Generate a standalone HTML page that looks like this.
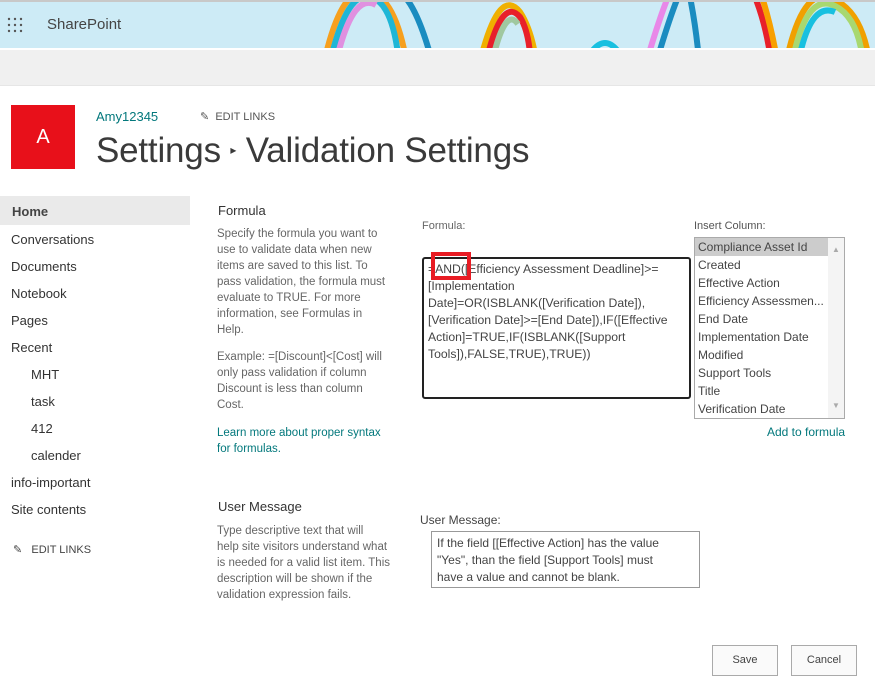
<!DOCTYPE html>
<html><head><meta charset="utf-8"><style>
*{margin:0;padding:0;box-sizing:border-box}
body{width:875px;height:682px;overflow:hidden;background:#fff;font-family:"Liberation Sans",sans-serif;color:#333;position:relative}
.a{position:absolute;white-space:nowrap}
.nav{font-size:13px;color:#333}
.desc{font-size:11.5px;line-height:16px;color:#666}
.link{color:#03787c}
</style></head><body>
<div class="a" style="left:0;top:0;width:875px;height:2px;background:#c8c8c8"></div>
<div class="a" style="left:0;top:2px;width:875px;height:46px;background:#cdebf6;overflow:hidden">
<svg width="875" height="46" style="position:absolute;left:0;top:0" fill="none" stroke-width="6">
<path d="M326 52 Q345 -25 375 -8 Q395 2 405 52" stroke="#f6a01e"/>
<path d="M332 52 Q350 -18 375 -3 Q392 6 398 52" stroke="#1fb6d6"/>
<path d="M338 52 Q354 -10 376 3" stroke="#e090e0"/>
<path d="M405 -5 Q418 10 430 52" stroke="#1a8cc0"/>
<path d="M482 52 Q500 -15 520 10 Q530 25 535 52" stroke="#f0b000"/>
<path d="M488 52 Q503 -5 520 15 Q528 28 530 52" stroke="#e8202a"/>
<path d="M494 52 Q506 5 518 22" stroke="#a0c8a0"/>
<path d="M590 52 Q605 30 620 52" stroke="#18c0e0"/>
<path d="M650 48 Q660 15 668 -5" stroke="#e888e8"/>
<path d="M660 48 Q670 15 678 -5" stroke="#1a8cc0"/>
<path d="M690 -5 Q695 20 698 48" stroke="#1a8cc0"/>
<path d="M755 -5 Q765 20 770 52" stroke="#e8202a"/>
<path d="M762 -5 Q770 20 776 52" stroke="#f8a000"/>
<path d="M788 52 Q805 -20 835 -2 Q860 10 868 52" stroke="#f0a000"/>
<path d="M794 52 Q808 -10 835 4 Q856 14 862 52" stroke="#a8d870"/>
<path d="M800 52 Q812 0 835 10" stroke="#18c0e0"/>
</svg>
</div>
<div class="a" style="left:7px;top:17px;width:16px;height:16px">
<svg width="16" height="16" fill="#555"><circle cx="2" cy="2" r="1.2"/><circle cx="8" cy="2" r="1.2"/><circle cx="14" cy="2" r="1.2"/><circle cx="2" cy="8" r="1.2"/><circle cx="8" cy="8" r="1.2"/><circle cx="14" cy="8" r="1.2"/><circle cx="2" cy="14" r="1.2"/><circle cx="8" cy="14" r="1.2"/><circle cx="14" cy="14" r="1.2"/></svg></div>
<div class="a" style="left:47px;top:16px;font-size:15px;color:#444">SharePoint</div>
<div class="a" style="left:0;top:50px;width:875px;height:36px;background:#f0f0f0;border-bottom:1px solid #e6e6e6"></div>
<div class="a" style="left:11px;top:105px;width:64px;height:64px;background:#e8101a;color:#fff;font-size:20px;text-align:center;line-height:64px">A</div>
<div class="a" style="left:96px;top:109px;font-size:13px;color:#03787c">Amy12345</div>
<div class="a" style="left:200px;top:110px;font-size:11px;color:#555">✎&nbsp; EDIT LINKS</div>
<div class="a" style="left:96px;top:131px;font-size:35px;color:#3a3a3a;letter-spacing:-0.2px">Settings <span style="font-size:12px;vertical-align:8px">▸</span> Validation Settings</div>

<div class="a" style="left:0;top:196px;width:190px;height:29px;background:#eaeaea"></div>
<div class="a nav" style="left:12px;top:204px;font-weight:bold;color:#444">Home</div>
<div class="a nav" style="left:11px;top:232px">Conversations</div>
<div class="a nav" style="left:11px;top:259px">Documents</div>
<div class="a nav" style="left:11px;top:286px">Notebook</div>
<div class="a nav" style="left:11px;top:313px">Pages</div>
<div class="a nav" style="left:11px;top:340px">Recent</div>
<div class="a nav" style="left:31px;top:367px">MHT</div>
<div class="a nav" style="left:31px;top:394px">task</div>
<div class="a nav" style="left:31px;top:421px">412</div>
<div class="a nav" style="left:31px;top:448px">calender</div>
<div class="a nav" style="left:11px;top:475px">info-important</div>
<div class="a nav" style="left:11px;top:502px">Site contents</div>
<div class="a" style="left:13px;top:543px;font-size:11px;color:#444">✎&nbsp;&nbsp; EDIT LINKS</div>

<div class="a" style="left:218px;top:203px;font-size:13px;color:#333">Formula</div>
<div class="a desc" style="left:217px;top:226px">Specify the formula you want to<br>use to validate data when new<br>items are saved to this list. To<br>pass validation, the formula must<br>evaluate to TRUE. For more<br>information, see Formulas in<br>Help.</div>
<div class="a desc" style="left:217px;top:349px">Example: =[Discount]&lt;[Cost] will<br>only pass validation if column<br>Discount is less than column<br>Cost.</div>
<div class="a desc link" style="left:217px;top:425px">Learn more about proper syntax<br>for formulas.</div>
<div class="a" style="left:218px;top:499px;font-size:13px;color:#333">User Message</div>
<div class="a desc" style="left:217px;top:523px">Type descriptive text that will<br>help site visitors understand what<br>is needed for a valid list item. This<br>description will be shown if the<br>validation expression fails.</div>

<div class="a" style="left:422px;top:220px;font-size:11px;color:#666">Formula:</div>
<div class="a" style="left:422px;top:257px;width:269px;height:142px;border:2px solid #222;border-radius:3px"></div>
<div class="a" style="left:428px;top:261px;font-size:12.2px;line-height:17px;color:#444">=AND([Efficiency Assessment Deadline]&gt;=<br>[Implementation<br>Date]=OR(ISBLANK([Verification Date]),<br>[Verification Date]&gt;=[End Date]),IF([Effective<br>Action]=TRUE,IF(ISBLANK([Support<br>Tools]),FALSE,TRUE),TRUE))</div>
<div class="a" style="left:431px;top:252px;width:40px;height:28px;border:4px solid #e81c24"></div>

<div class="a" style="left:694px;top:220px;font-size:11px;color:#555">Insert Column:</div>
<div class="a" style="left:694px;top:237px;width:151px;height:182px;border:1px solid #aaa;background:#fff;overflow:hidden;font-size:12px;color:#444;line-height:18px">
<div style="background:#ccc;padding-left:3px;width:133px">Compliance Asset Id</div>
<div style="padding-left:3px">Created</div><div style="padding-left:3px">Effective Action</div><div style="padding-left:3px;white-space:nowrap;overflow:hidden;width:133px">Efficiency Assessmen...</div><div style="padding-left:3px">End Date</div><div style="padding-left:3px">Implementation Date</div><div style="padding-left:3px">Modified</div><div style="padding-left:3px">Support Tools</div><div style="padding-left:3px">Title</div><div style="padding-left:3px">Verification Date</div>
<div style="position:absolute;right:0;top:0;width:16px;height:180px;background:#f4f4f4;font-size:8px;color:#aaa;text-align:center"><div style="margin-top:3px">▲</div><div style="position:absolute;bottom:3px;width:16px">▼</div></div>
</div>
<div class="a link" style="left:767px;top:425px;font-size:12px">Add to formula</div>

<div class="a" style="left:420px;top:513px;font-size:12px;color:#444">User Message:</div>
<div class="a" style="left:431px;top:531px;width:269px;height:57px;border:1px solid #999"></div>
<div class="a" style="left:437px;top:535px;font-size:12px;line-height:17px;color:#444">If the field [[Effective Action] has the value<br>"Yes", than the field [Support Tools] must<br>have a value and cannot be blank.</div>

<div class="a" style="left:712px;top:645px;width:66px;height:31px;border:1px solid #aaa;background:#fafafa;font-size:11px;text-align:center;line-height:29px;color:#444">Save</div>
<div class="a" style="left:791px;top:645px;width:66px;height:31px;border:1px solid #aaa;background:#fafafa;font-size:11px;text-align:center;line-height:29px;color:#444">Cancel</div>
</body></html>
